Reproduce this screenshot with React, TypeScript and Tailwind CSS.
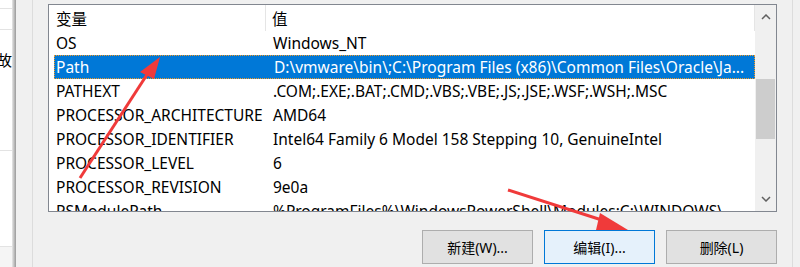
import React from "react";

const rows: [string, string][] = [
  ["OS", "Windows_NT"],
  ["Path", "D:\\vmware\\bin\\;C:\\Program Files (x86)\\Common Files\\Oracle\\Ja..."],
  ["PATHEXT", ".COM;.EXE;.BAT;.CMD;.VBS;.VBE;.JS;.JSE;.WSF;.WSH;.MSC"],
  ["PROCESSOR_ARCHITECTURE", "AMD64"],
  ["PROCESSOR_IDENTIFIER", "Intel64 Family 6 Model 158 Stepping 10, GenuineIntel"],
  ["PROCESSOR_LEVEL", "6"],
  ["PROCESSOR_REVISION", "9e0a"],
  ["PSModulePath", "%ProgramFiles%\\WindowsPowerShell\\Modules;C:\\WINDOWS\\..."],
];

export default function App() {
  return (
    <div
      className="relative w-[800px] h-[267px] overflow-hidden bg-[#f0f0f0] flex text-black text-[15.5px]"
      style={{ fontFamily: '"Noto Sans", "Noto Sans CJK SC", sans-serif' }}
    >
      {/* left strip */}
      <div className="relative w-[16px] h-full bg-white shrink-0 overflow-hidden flex flex-col">
        <div className="h-[9px] border-b border-[#e3e3e3]" />
        <div className="h-[21px] border-b border-[#e3e3e3]" />
        <div className="h-[121px] border-b border-[#e3e3e3] relative">
          <span className="absolute left-[-3px] top-[20px] leading-[20px] text-[15px]">故</span>
        </div>
        <div className="h-[96px] border-b border-[#e3e3e3]" />
        <div className="flex-1 bg-[#f5f5f5]" />
        <div className="absolute right-0 top-0 h-full w-[4px] bg-gradient-to-r from-[#e8e8e8] to-[#9a9a9a]" />
      </div>
      <div className="w-[17px] shrink-0 border-r border-[#dcdcdc]" />
      <div className="w-[15px] shrink-0" />

      {/* main */}
      <div className="flex flex-col w-[729px] shrink-0 pt-[4px]">
        <div className="h-[208px] border border-[#828790] bg-white flex overflow-hidden">
          <div className="flex-1 flex flex-col pl-[5px] overflow-hidden">
            {/* header */}
            <div className="h-[26px] flex shrink-0 items-center">
              <div className="w-[212px] h-full border-r border-[#e5e5e5] flex items-center pl-[2px] pt-[3px]">变量</div>
              <div className="flex-1 h-full border-r border-[#e5e5e5] flex items-center pl-[6px] pt-[3px]">值</div>
            </div>
            {rows.map(([k, v], i) => {
              const sel = i === 1;
              return (
                <div
                  key={k}
                  className={
                    "h-[24px] shrink-0 flex items-center whitespace-nowrap pt-[2px] " +
                    (sel ? "bg-[#0078d7] text-white border border-dotted border-[#f59a23]" : "")
                  }
                >
                  <div className={"w-[212px] overflow-hidden " + (sel ? "pl-[1px]" : "pl-[2px]")}>{k}</div>
                  <div className="flex-1 pl-[7px] overflow-hidden">{v}</div>
                </div>
              );
            })}
          </div>
          {/* scrollbar */}
          <div className="w-[21px] shrink-0 bg-[#f0f0f0] flex flex-col items-center">
            <div className="h-[24px] w-full flex items-center justify-center">
              <svg width="10" height="6" viewBox="0 0 10 6">
                <path d="M1 5 L5 1 L9 5" stroke="#606060" strokeWidth="1.5" fill="none" />
              </svg>
            </div>
            <div className="h-[50px]" />
            <div className="h-[60px] w-[19px] bg-[#cdcdcd]" />
            <div className="flex-1" />
            <div className="h-[24px] w-full flex items-center justify-center">
              <svg width="10" height="6" viewBox="0 0 10 6">
                <path d="M1 1 L5 5 L9 1" stroke="#606060" strokeWidth="1.5" fill="none" />
              </svg>
            </div>
          </div>
        </div>
        <div className="flex justify-end gap-[11px] mt-[18px] text-[14px]">
          <button className="w-[111px] h-[34px] bg-[#e1e1e1] border border-[#adadad]">新建(W)...</button>
          <button className="w-[111px] h-[34px] bg-[#e5f1fb] border border-[#0078d7]">编辑(I)...</button>
          <button className="w-[111px] h-[34px] bg-[#e1e1e1] border border-[#adadad]">删除(L)</button>
        </div>
      </div>
      <div className="w-[16px] shrink-0 border-r border-[#dcdcdc]" />

      {/* arrows */}
      <svg className="absolute left-0 top-0 pointer-events-none" width="800" height="267">
        <line x1="80" y1="178" x2="150" y2="70" stroke="#f03a3a" strokeWidth="3" />
        <polygon points="160,57 140,72 154,79" fill="#f03a3a" />
        <line x1="508" y1="190" x2="608" y2="222" stroke="#f03a3a" strokeWidth="3" />
        <polygon points="628,230 600,213 596,230" fill="#f03a3a" />
      </svg>
    </div>
  );
}
